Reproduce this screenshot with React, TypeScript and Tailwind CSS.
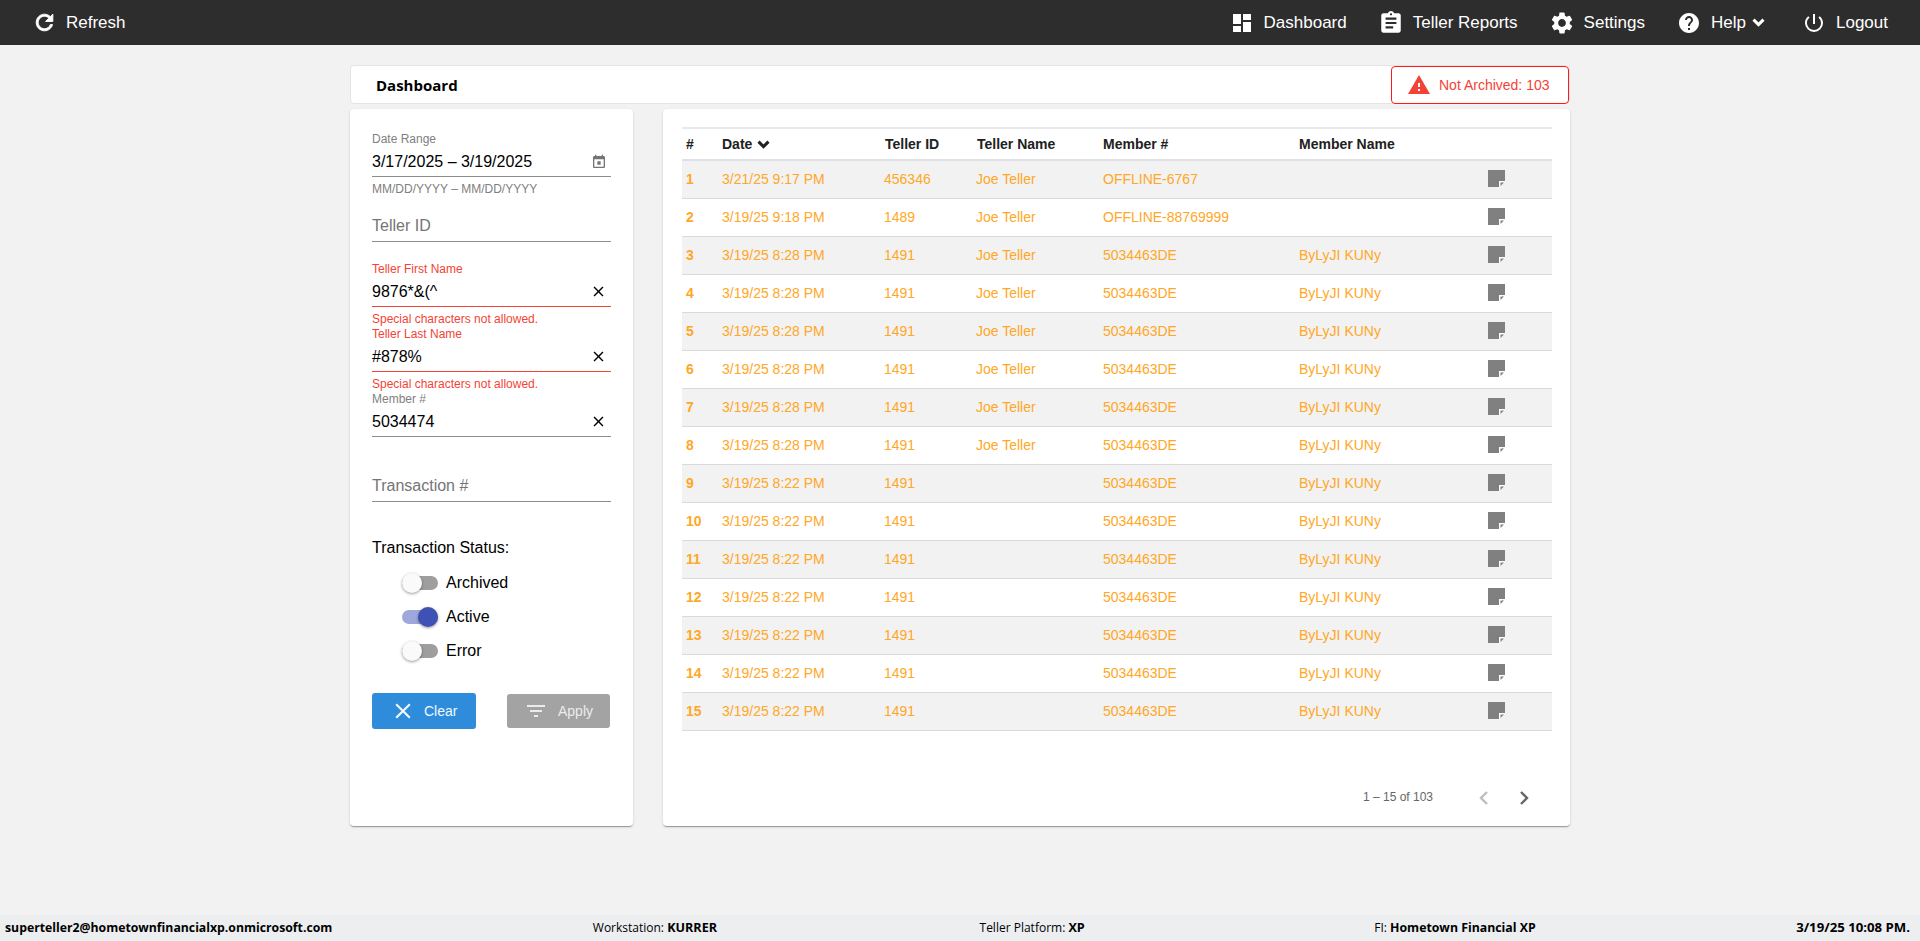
import type { ReactNode } from "react";
import {
  MdAssignment,
  MdClose,
  MdDashboard,
  MdFilterList,
  MdHelp,
  MdPowerSettingsNew,
  MdSettings,
  MdWarning,
} from "react-icons/md";

type Row = {
  date: string;
  tellerId: string;
  tellerName: string;
  memberNo: string;
  memberName: string;
};

const offlineOne: Row = { date: "3/21/25 9:17 PM", tellerId: "456346", tellerName: "Joe Teller", memberNo: "OFFLINE-6767", memberName: "" };
const offlineTwo: Row = { date: "3/19/25 9:18 PM", tellerId: "1489", tellerName: "Joe Teller", memberNo: "OFFLINE-88769999", memberName: "" };
const named: Row = { date: "3/19/25 8:28 PM", tellerId: "1491", tellerName: "Joe Teller", memberNo: "5034463DE", memberName: "ByLyJI KUNy" };
const unnamed: Row = { date: "3/19/25 8:22 PM", tellerId: "1491", tellerName: "", memberNo: "5034463DE", memberName: "ByLyJI KUNy" };

const rows: Row[] = [
  offlineOne,
  offlineTwo,
  ...Array.from({ length: 6 }, () => named),
  ...Array.from({ length: 7 }, () => unnamed),
];

function Chevron({ className }: { className: string }) {
  return (
    <svg viewBox="0 0 12 8" className={className} fill="none" stroke="currentColor" strokeWidth="2.8">
      <path d="M1.4 1.4 6 6l4.6-4.6" />
    </svg>
  );
}

function RefreshIcon() {
  return (
    <svg viewBox="0 0 24 24" className="h-[25px] w-[25px]" fill="currentColor" stroke="currentColor" strokeWidth="0.9">
      <path d="M17.65 6.35C16.2 4.9 14.21 4 12 4c-4.42 0-7.99 3.58-7.99 8s3.57 8 7.99 8c3.73 0 6.84-2.55 7.73-6h-2.08c-.82 2.33-3.04 4-5.65 4-3.31 0-6-2.69-6-6s2.69-6 6-6c1.66 0 3.14.69 4.22 1.78L13 11h7V4l-2.35 2.35z" />
    </svg>
  );
}

function PageArrow({ d, className }: { d: string; className: string }) {
  return (
    <div className={className}>
      <svg viewBox="0 0 24 24" className="h-6 w-6" fill="none" stroke="currentColor" strokeWidth="2.4">
        <path d={d} />
      </svg>
    </div>
  );
}

function NoteIcon() {
  return (
    <svg viewBox="0 0 17 17" className="h-[17px] w-[17px]">
      <path d="M0 0H17V11H11V17H0Z" fill="#808080" />
      <path d="M11 11H17L11 17Z" fill="#ffffff" />
      <path d="M12.5 12.5H16L12.5 16Z" fill="#808080" />
    </svg>
  );
}

function CalendarIcon() {
  return (
    <svg viewBox="0 0 24 24" className="h-4 w-4" fill="#757575">
      <path d="M19 3h-1V1h-2v2H8V1H6v2H5c-1.11 0-1.99.9-1.99 2L3 19c0 1.1.89 2 2 2h14c1.1 0 2-.9 2-2V5c0-1.1-.9-2-2-2zm0 16H5V8h14v11zM9.5 11h5v5h-5z" />
    </svg>
  );
}

function NavItem({ icon, label, extra }: { icon: ReactNode; label: string; extra?: ReactNode }) {
  return (
    <div className="flex items-center gap-[10px]">
      {icon}
      <span>{label}</span>
      {extra}
    </div>
  );
}

function Field({
  label,
  value,
  hint,
  error,
  placeholder,
  icon,
}: {
  label?: string;
  value?: string;
  hint?: string;
  error?: string;
  placeholder?: string;
  icon?: ReactNode;
}) {
  const isError = Boolean(error);
  return (
    <div className="h-[65px]">
      <div className={isError ? "h-[18px] text-xs leading-[20px] text-[#f44336]" : "h-[18px] text-xs leading-[20px] text-[#808080]"}>
        {label}
      </div>
      <div className={isError ? "flex h-[30px] items-center justify-between border-b border-[#f44336] pr-[4px]" : "flex h-[30px] items-center justify-between border-b border-[#8c8c8c] pr-[4px]"}>
        {placeholder ? <span className="-mt-[2px] text-[#757575]">{placeholder}</span> : <span className="text-black">{value}</span>}
        {icon}
      </div>
      {hint && <div className="h-[17px] text-xs leading-[24px] text-[#808080]">{hint}</div>}
      {error && <div className="h-[17px] text-xs leading-[24px] text-[#f44336]">{error}</div>}
    </div>
  );
}

function StatusSwitch({ label, on }: { label: string; on?: boolean }) {
  return (
    <div className="flex h-[34px] items-center gap-2 pl-[30px]">
      <div className={on ? "flex h-[14px] w-9 items-center justify-end rounded-full bg-[#9fa8da]" : "flex h-[14px] w-9 items-center justify-start rounded-full bg-[#9e9e9e]"}>
        <div
          className={
            on
              ? "h-5 w-5 rounded-full bg-[#3f51b5] shadow-[0_1px_3px_rgba(0,0,0,0.4)]"
              : "h-5 w-5 rounded-full bg-[#fafafa] shadow-[0_1px_3px_rgba(0,0,0,0.4)]"
          }
        />
      </div>
      <span className="text-black">{label}</span>
    </div>
  );
}

export default function App() {
  const clearIcon = <MdClose className="h-[17px] w-[17px] text-black" />;

  return (
    <div className="flex min-h-[941px] flex-col bg-[#f2f2f2] font-['Liberation_Sans',Arial,sans-serif] text-black">
      <header className="flex h-[45px] items-center justify-between bg-[#2d2d2d] pl-[32px] pr-[32px] text-[17px] text-white">
        <div className="flex items-center gap-[9px]">
          <RefreshIcon />
          <span>Refresh</span>
        </div>
        <nav className="flex items-center gap-8">
          <NavItem icon={<MdDashboard className="h-6 w-6" />} label="Dashboard" />
          <NavItem icon={<MdAssignment className="-mx-px h-[26px] w-[26px]" />} label="Teller Reports" />
          <NavItem icon={<MdSettings className="-mx-px h-[26px] w-[26px]" />} label="Settings" />
          <NavItem
            icon={<MdHelp className="h-6 w-6" />}
            label="Help"
            extra={<Chevron className="-ml-[4px] mr-[5px] h-[9px] w-[13px]" />}
          />
          <NavItem icon={<MdPowerSettingsNew className="h-6 w-6" />} label="Logout" />
        </nav>
      </header>

      <main className="mx-auto mt-5 w-[1220px]">
        <div className="flex h-[39px] items-center justify-between rounded-[4px] border border-[#e4e4e4] bg-white pl-[25px]">
          <h1 className="mt-[2px] font-['Open_Sans',sans-serif] text-[15px] font-bold text-black">Dashboard</h1>
          <div className="flex h-[38px] w-[178px] items-center gap-2 rounded-[4px] border border-[#ff1a1a] bg-white pl-[15px] text-sm text-[#f44336]">
            <MdWarning className="h-6 w-6 shrink-0" />
            <span>Not Archived: 103</span>
          </div>
        </div>

        <div className="mt-[5px] flex gap-[30px]">
          <aside className="h-[717px] w-[283px] rounded-[4px] bg-white px-[22px] pt-5 shadow-[0_2px_1px_-1px_rgba(0,0,0,0.2),0_1px_1px_0_rgba(0,0,0,0.14),0_1px_3px_0_rgba(0,0,0,0.12)]">
            <Field label="Date Range" value="3/17/2025 – 3/19/2025" hint="MM/DD/YYYY – MM/DD/YYYY" icon={<CalendarIcon />} />
            <Field placeholder="Teller ID" />
            <Field label="Teller First Name" value="9876*&(^" error="Special characters not allowed." icon={clearIcon} />
            <Field label="Teller Last Name" value="#878%" error="Special characters not allowed." icon={clearIcon} />
            <Field label="Member #" value="5034474" icon={clearIcon} />
            <Field placeholder="Transaction #" />

            <div className="mt-[17px] leading-6">Transaction Status:</div>
            <div className="mt-[6px]">
              <StatusSwitch label="Archived" />
              <StatusSwitch label="Active" on />
              <StatusSwitch label="Error" />
            </div>

            <div className="mt-[25px] flex items-center justify-between pr-px">
              <button className="flex h-9 w-[104px] items-center gap-2 rounded-[3px] bg-[#2f8cdb] pl-[18px] text-sm text-[#f2f7fc]">
                <MdClose className="h-[26px] w-[26px]" />
                Clear
              </button>
              <button className="flex h-[34px] w-[103px] items-center gap-[10px] rounded-[3px] bg-[#a3a3a3] pl-[17px] text-sm text-[#ececec]">
                <MdFilterList className="h-6 w-6" />
                Apply
              </button>
            </div>
          </aside>

          <section className="h-[717px] w-[907px] rounded-[4px] bg-white pl-[19px] pr-[18px] pt-[18px] shadow-[0_2px_1px_-1px_rgba(0,0,0,0.2),0_1px_1px_0_rgba(0,0,0,0.14),0_1px_3px_0_rgba(0,0,0,0.12)]">
            <table className="w-[870px] table-fixed border-separate border-spacing-0 text-left text-sm">
              <colgroup>
                <col className="w-[36px]" />
                <col className="w-[163px]" />
                <col className="w-[92px]" />
                <col className="w-[126px]" />
                <col className="w-[196px]" />
                <col className="w-[189px]" />
                <col className="w-[68px]" />
              </colgroup>
              <thead>
                <tr className="text-[#212121]">
                  <th className="h-[34px] border-y-2 border-t-[#e8e9ed] border-b-[#dfe1e7] pl-1 font-bold">#</th>
                  <th className="h-[34px] border-y-2 border-t-[#e8e9ed] border-b-[#dfe1e7] pl-1 font-bold">
                    <span className="flex items-center gap-[5px]">
                      Date
                      <Chevron className="h-[9px] w-[13px]" />
                    </span>
                  </th>
                  <th className="h-[34px] border-y-2 border-t-[#e8e9ed] border-b-[#dfe1e7] pl-1 font-bold">Teller ID</th>
                  <th className="h-[34px] border-y-2 border-t-[#e8e9ed] border-b-[#dfe1e7] pl-1 font-bold">Teller Name</th>
                  <th className="h-[34px] border-y-2 border-t-[#e8e9ed] border-b-[#dfe1e7] pl-1 font-bold">Member #</th>
                  <th className="h-[34px] border-y-2 border-t-[#e8e9ed] border-b-[#dfe1e7] pl-1 font-bold">Member Name</th>
                  <th className="h-[34px] border-y-2 border-t-[#e8e9ed] border-b-[#dfe1e7]" />
                </tr>
              </thead>
              <tbody className="text-[#ffa726]">
                {rows.map((row, i) => (
                  <tr key={i} className={i % 2 === 0 ? "bg-[#f2f2f2]" : "bg-white"}>
                    <td className="h-[38px] border-b border-[#dadade] pb-[2px] pl-1 font-bold">{i + 1}</td>
                    <td className="h-[38px] border-b border-[#dadade] pb-[2px] pl-1">{row.date}</td>
                    <td className="h-[38px] border-b border-[#dadade] pb-[2px] pl-[3px]">{row.tellerId}</td>
                    <td className="h-[38px] border-b border-[#dadade] pb-[2px] pl-[3px]">{row.tellerName}</td>
                    <td className="h-[38px] border-b border-[#dadade] pb-[2px] pl-1">{row.memberNo}</td>
                    <td className="h-[38px] border-b border-[#dadade] pb-[2px] pl-1">{row.memberName}</td>
                    <td className="h-[38px] border-b border-[#dadade] pb-[2px] pl-1">
                      <NoteIcon />
                    </td>
                  </tr>
                ))}
              </tbody>
            </table>

            <div className="mt-[47px] flex h-10 items-center justify-end pr-2 text-xs text-[#666666]">
              <span className="mb-[2px] mr-[31px]">1 – 15 of 103</span>
              <PageArrow d="M15 6l-6 6 6 6" className="flex h-10 w-10 items-center justify-center text-[#bdbdbd]" />
              <PageArrow d="M9 6l6 6-6 6" className="flex h-10 w-10 items-center justify-center text-[#666666]" />
            </div>
          </section>
        </div>
      </main>

      <footer className="mt-auto flex h-[26px] items-center justify-between bg-[#eceef0] pl-[5px] pr-[10px] font-['Open_Sans',sans-serif] text-xs text-black">
        <b className="text-[12.25px] font-bold">superteller2@hometownfinancialxp.onmicrosoft.com</b>
        <span className="mr-[2px]">
          Workstation: <b className="text-[12.6px] font-bold">KURRER</b>
        </span>
        <span className="mr-[29px]">
          Teller Platform: <b className="text-[12.6px] font-bold">XP</b>
        </span>
        <span>
          FI: <b className="text-[12.3px] font-bold">Hometown Financial XP</b>
        </span>
        <b className="text-[13.2px] font-bold">3/19/25 10:08 PM.</b>
      </footer>
    </div>
  );
}
